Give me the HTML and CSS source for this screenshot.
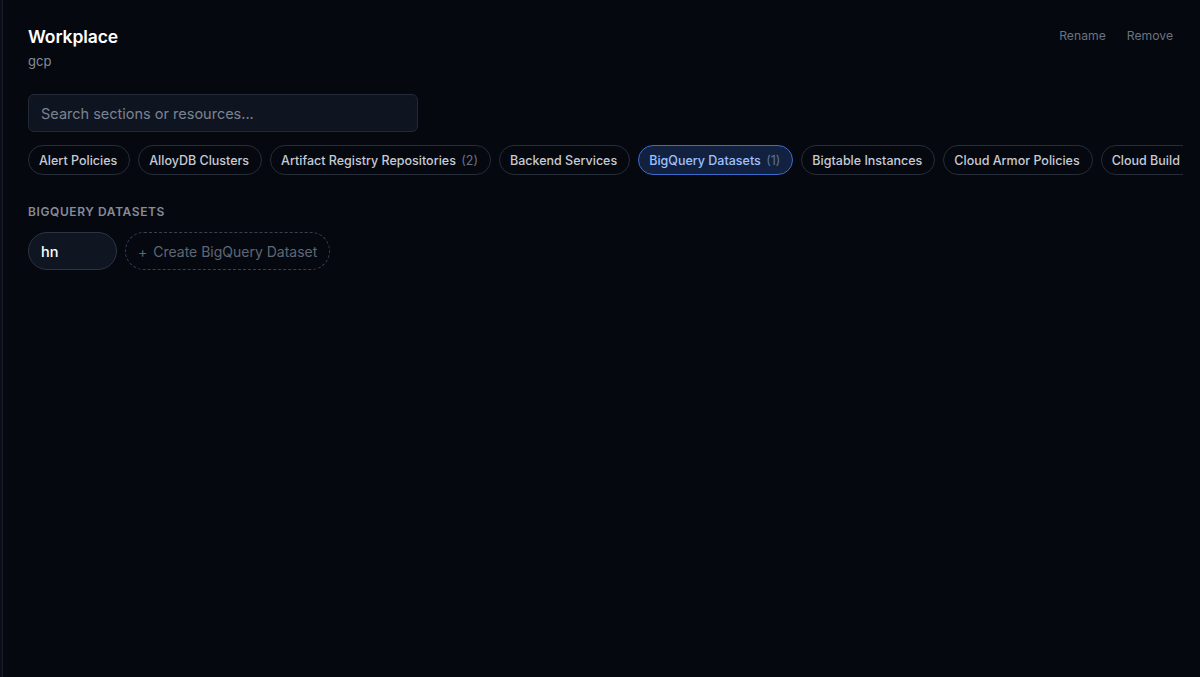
FILE: index.html
```html
<!DOCTYPE html>
<html lang="en">
<head>
    <meta charset="UTF-8">
    <meta name="viewport" content="width=device-width, initial-scale=1.0">
    <title>Workplace</title>
    <link rel="stylesheet" href="styles.css">
</head>
<body>
    <div class="app">
        <div class="sidebar-edge"></div>
        <main class="workspace">
            <header class="workspace-header">
                <div>
                    <h1 class="workspace-title">Workplace</h1>
                    <div class="workspace-provider">gcp</div>
                </div>
                <div class="header-actions">
                    <button class="link-btn">Rename</button>
                    <button class="link-btn">Remove</button>
                </div>
            </header>

            <input type="text" class="search" placeholder="Search sections or resources...">

            <div class="chips">
                <button class="chip">Alert Policies</button>
                <button class="chip">AlloyDB Clusters</button>
                <button class="chip">Artifact Registry Repositories <span class="count">(2)</span></button>
                <button class="chip">Backend Services</button>
                <button class="chip active">BigQuery Datasets <span class="count">(1)</span></button>
                <button class="chip">Bigtable Instances</button>
                <button class="chip">Cloud Armor Policies</button>
                <button class="chip">Cloud Build</button>
            </div>

            <section class="section">
                <h2 class="section-title">BigQuery Datasets</h2>
                <div class="resources">
                    <button class="resource">hn</button>
                    <button class="resource-create"><span class="plus">+</span> Create BigQuery Dataset</button>
                </div>
            </section>
        </main>
    </div>
</body>
</html>
```

FILE: styles.css
```css
body {
    background-color: #05080f;
    font-family: 'Inter', 'Liberation Sans', sans-serif;
    color: #fff;
    margin: 0;
    overflow: hidden;
}

button {
    font-family: inherit;
    cursor: pointer;
}

.app {
    display: flex;
    height: 100vh;
}

.sidebar-edge {
    width: 2px;
    background-color: #0a0e16;
    border-right: 1px solid #1a1f29;
    flex-shrink: 0;
}

.workspace {
    flex: 1;
    min-width: 0;
    padding: 24px 27px 0 25px;
}

.workspace-header {
    display: flex;
    justify-content: space-between;
    align-items: flex-start;
}

.workspace-title {
    font-size: 17.5px;
    font-weight: 600;
    margin: 2px 0 0;
    line-height: 22px;
    letter-spacing: -0.1px;
}

.workspace-provider {
    font-size: 13px;
    color: #858c99;
    margin-top: 5px;
}

.header-actions {
    display: flex;
    gap: 21px;
    padding-top: 4px;
}

.link-btn {
    background: none;
    border: none;
    padding: 0;
    color: #6b7280;
    font-size: 12.2px;
}

.search {
    display: block;
    box-sizing: border-box;
    width: 390px;
    height: 38px;
    margin-top: 25px;
    padding: 0 12px;
    background-color: #0f1520;
    border: 1px solid #222937;
    border-radius: 6px;
    color: #fff;
    font-family: inherit;
    font-size: 14.5px;
    outline: none;
}

.search::placeholder {
    color: #7b8391;
}

.chips {
    display: flex;
    gap: 8px;
    margin-top: 13px;
    margin-right: -10px;
    overflow: hidden;
}

.chip {
    flex-shrink: 0;
    height: 30px;
    padding: 0 12px 0 10px;
    background-color: #05080f;
    border: 1px solid #272d38;
    border-radius: 999px;
    color: #c7cbd3;
    font-size: 12.5px;
    font-weight: 500;
    white-space: nowrap;
}

.chip:last-child {
    padding-right: 20px;
}

.chip .count {
    color: #6b7280;
    font-weight: 400;
    margin-left: 2px;
}

.chip.active {
    background-color: #12213f;
    border-color: #3d6ccc;
    color: #9fc1ff;
}

.chip.active .count {
    color: #5e7499;
}

.section {
    margin-top: 29px;
}

.section-title {
    font-size: 12px;
    font-weight: 600;
    text-transform: uppercase;
    letter-spacing: 0.6px;
    color: #858c99;
    margin: 0;
}

.resources {
    display: flex;
    gap: 8px;
    margin-top: 13px;
}

.resource {
    box-sizing: border-box;
    width: 89px;
    height: 38px;
    padding: 0 12px;
    text-align: left;
    background-color: #0f1622;
    border: 1px solid #2c3443;
    border-radius: 999px;
    color: #fff;
    font-size: 14.5px;
    font-weight: 500;
}

.resource-create {
    height: 38px;
    padding: 0 12px;
    background: none;
    border: 1px dashed #3a414d;
    border-radius: 999px;
    color: #5f6775;
    font-size: 14px;
}

.resource-create .plus {
    margin-right: 2px;
}
```
